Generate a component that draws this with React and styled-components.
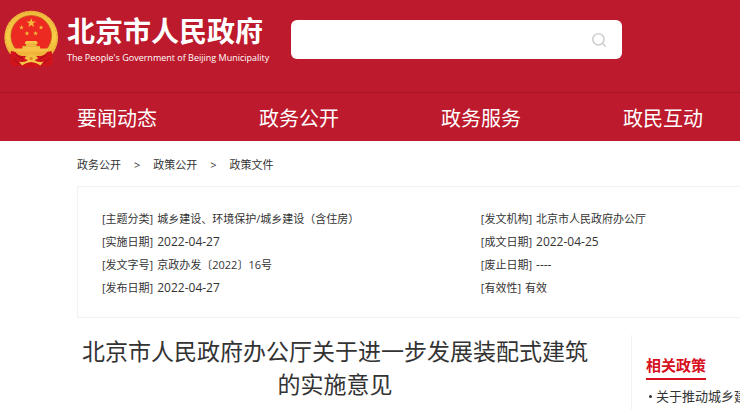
import React from 'react';
import styled, { createGlobalStyle, ThemeProvider } from 'styled-components';

const theme = {
  colors: {
    primary: '#bd1a2d',
    primaryDark: '#a01729',
    accent: '#d7101d',
    text: '#333333',
    border: '#f2f2f2',
    white: '#ffffff',
    icon: '#d0d0d0',
  },
  gutter: '77px',
};

const GlobalStyle = createGlobalStyle`
  * {
    box-sizing: border-box;
  }

  body {
    margin: 0;
    background: #ffffff;
    color: #333333;
    font-family: 'Open Sans', 'Noto Sans CJK SC', sans-serif;
    font-size: 11px;
  }

  a {
    color: inherit;
    text-decoration: none;
  }

  h1, h2, ul, ol, dl, dd {
    margin: 0;
    padding: 0;
  }

  ul, ol {
    list-style: none;
  }
`;

const Header = styled.header`
  background: ${({ theme }) => theme.colors.primary};
  color: ${({ theme }) => theme.colors.white};
`;

const Banner = styled.div`
  display: flex;
  align-items: flex-start;
  height: 92px;
  padding: 10px 118px 0 4px;
`;

const Brand = styled.a`
  display: flex;
  flex: none;
  width: 287px;
  gap: 8px;
`;

const Emblem = styled.svg`
  display: block;
  flex: none;
  width: 55px;
  height: 58px;
`;

const BrandText = styled.div`
  display: flex;
  flex-direction: column;
  padding-top: 5px;
  white-space: nowrap;
`;

const BrandName = styled.strong`
  font-size: 28px;
  line-height: 32px;
`;

const BrandSub = styled.span`
  font-size: 9px;
  line-height: 22px;
`;

const SearchForm = styled.form`
  display: flex;
  flex: 1;
  align-items: center;
  height: 39px;
  margin-top: 10px;
  padding-right: 15px;
  border-radius: 6px;
  background: ${({ theme }) => theme.colors.white};
`;

const SearchInput = styled.input`
  flex: 1;
  min-width: 0;
  height: 100%;
  padding: 0 12px;
  border: 0;
  outline: 0;
  background: transparent;
  font: inherit;
  font-size: 13px;
`;

const SearchButton = styled.button`
  display: flex;
  padding: 0;
  border: 0;
  background: transparent;
  color: ${({ theme }) => theme.colors.icon};
  cursor: pointer;
`;

const Nav = styled.nav`
  display: flex;
  align-items: center;
  justify-content: space-between;
  height: 49px;
  padding: 3px 37px 0 ${({ theme }) => theme.gutter};
  border-top: 1px solid ${({ theme }) => theme.colors.primaryDark};
`;

const NavLink = styled.a`
  font-size: 20px;
  line-height: 28px;
`;

const Main = styled.main`
  padding-left: ${({ theme }) => theme.gutter};
`;

const Breadcrumb = styled.ol`
  display: flex;
  align-items: center;
  height: 45px;
  padding-top: 2px;
`;

const Crumb = styled.li`
  line-height: 20px;

  & + &::before {
    content: '>';
    margin: 0 13px;
  }
`;

const MetaBox = styled.section`
  display: grid;
  grid-template-columns: 19fr 13fr;
  padding: 20px 0 18px 24px;
  border: 1px solid ${({ theme }) => theme.colors.border};
  border-right: 0;
`;

const MetaList = styled.dl`
  display: flex;
  flex-direction: column;
  white-space: nowrap;
`;

const MetaRow = styled.div`
  display: flex;
  align-items: center;
  gap: 4px;
  height: 23px;
  line-height: 22px;
`;

const MetaValue = styled.dd`
  font-size: ${({ $numeric }) => ($numeric ? '12px' : '11px')};
`;

const Article = styled.div`
  display: grid;
  grid-template-columns: minmax(0, 1fr) 109px;
  gap: 38px;
  padding-top: 17px;
`;

const Title = styled.h1`
  font-size: 23px;
  font-weight: 400;
  line-height: 33px;
  text-align: center;
`;

const Aside = styled.aside`
  min-height: 75px;
  padding: 20px 0 0 14px;
  border-left: 1px solid ${({ theme }) => theme.colors.border};
  overflow: hidden;
  white-space: nowrap;
`;

const AsideTitle = styled.h2`
  width: fit-content;
  padding-bottom: 3px;
  border-bottom: 2px solid ${({ theme }) => theme.colors.accent};
  color: ${({ theme }) => theme.colors.accent};
  font-size: 15px;
  line-height: 20px;
`;

const AsideItem = styled.li`
  display: flex;
  align-items: center;
  gap: 4px;
  padding: 6px 0 0 3px;
  font-size: 13px;
  line-height: 20px;

  &::before {
    content: '';
    flex: none;
    width: 3px;
    height: 3px;
    border-radius: 50%;
    background: ${({ theme }) => theme.colors.text};
  }
`;

const navItems = ['要闻动态', '政务公开', '政务服务', '政民互动'];

const crumbs = ['政务公开', '政策公开', '政策文件'];

const metaColumns = [
  [
    { label: '主题分类', value: '城乡建设、环境保护/城乡建设（含住房）' },
    { label: '实施日期', value: '2022-04-27', numeric: true },
    { label: '发文字号', value: '京政办发〔2022〕16号' },
    { label: '发布日期', value: '2022-04-27', numeric: true },
  ],
  [
    { label: '发文机构', value: '北京市人民政府办公厅' },
    { label: '成文日期', value: '2022-04-25', numeric: true },
    { label: '废止日期', value: '----', numeric: true },
    { label: '有效性', value: '有效' },
  ],
];

const related = ['关于推动城乡建设'];

const STAR = 'M0-5 1.2-1.6 4.8-1.5 1.9.6 2.9 4 0 2-2.9 4-1.9.6-4.8-1.5-1.2-1.6Z';

// x, y, scale
const stars = [
  [27.2, 13, 1],
  [17.5, 17.5, 0.5],
  [37, 17.5, 0.5],
  [23, 23.4, 0.5],
  [31.6, 23.4, 0.5],
];

function NationalEmblem() {
  return (
    <Emblem viewBox="0 0 55 58" aria-hidden="true">
      <defs>
        <linearGradient id="gold" x1="0" y1="0" x2="0" y2="1">
          <stop offset="0" stopColor="#f0b93c" />
          <stop offset="0.5" stopColor="#f8cc45" />
          <stop offset="1" stopColor="#e9a92e" />
        </linearGradient>
        <clipPath id="ring">
          <path d="M0 0h55v44H0Z" />
        </clipPath>
      </defs>
      <g clipPath="url(#ring)">
        <circle cx="27.2" cy="27.5" r="26.8" fill="url(#gold)" />
        <circle cx="27.2" cy="27.5" r="25.6" fill="none" stroke="#e0a235" strokeDasharray="2 2" />
      </g>
      <circle cx="27.2" cy="25.8" r="20.3" fill="#ec2a21" stroke="#bf5a1c" strokeWidth="0.7" />
      {stars.map(([x, y, s]) => (
        <path key={`${x}-${y}`} d={STAR} transform={`translate(${x} ${y}) scale(${s})`} fill="#f3b83c" />
      ))}
      <path d="M22 31h10.5l1.5 2.5-1.5.6V36H36v2l1 3H17.5l1-3v-2H22v-1.9l-1.5-.6Z" fill="#f5c547" />
      <path d="M22 34.3h10.5M18.5 36.3H36" stroke="#dc922c" strokeWidth="0.6" />
      <path d="M10.5 38.5H44l.5 4.500H10Z" fill="#f5c146" />
      <path d="M7 41q20 5 40.5 0l1.500 8-1 5-5.500 3-3.500-2-3 2.500H19l-3.500-2.500-3.500 2L6.500 54 6 48Z" fill="#d1141b" />
      <path d="M11 41.5h32.5q-3 4-7 4.500H18q-4-.5-7-4.500Z" fill="#f0b43a" />
      <path d="M9 48l6 6M45.5 48l-6 6M12 45l7 4M42.5 45l-7 4" stroke="#a20d17" />
      <path d="M20.5 48.500a7 5 0 0 1 13.500 0l-3 1.500h-7.500Z" fill="#f4c044" />
      <circle cx="27.2" cy="48.5" r="1.6" fill="#d7892a" />
      <path d="M15 51.5q6 1.500 9-1.500h6.500q3 3 9 1.500l-3 4q-4.500-3.500-9.300-3.500T18 55.500Z" fill="#f6c947" />
      <path d="M19 57q8-5.500 16.500 0Z" fill="#d1141b" />
    </Emblem>
  );
}

function SearchIcon() {
  return (
    <svg width="16" height="16" viewBox="0 0 16 16" fill="none" stroke="currentColor" strokeWidth="1.6" aria-hidden="true">
      <circle cx="7.4" cy="7.3" r="5.6" />
      <path d="m11.3 11.3 3 3" strokeLinecap="round" />
    </svg>
  );
}

export default function App() {
  return (
    <ThemeProvider theme={theme}>
      <GlobalStyle />
      <Header>
        <Banner>
          <Brand href="#">
            <NationalEmblem />
            <BrandText>
              <BrandName>北京市人民政府</BrandName>
              <BrandSub>The People's Government of Beijing Municipality</BrandSub>
            </BrandText>
          </Brand>
          <SearchForm role="search" onSubmit={(e) => e.preventDefault()}>
            <SearchInput type="text" aria-label="搜索" />
            <SearchButton type="submit" aria-label="搜索">
              <SearchIcon />
            </SearchButton>
          </SearchForm>
        </Banner>
        <Nav>
          {navItems.map((item) => (
            <NavLink key={item} href="#">{item}</NavLink>
          ))}
        </Nav>
      </Header>
      <Main>
        <Breadcrumb>
          {crumbs.map((crumb) => (
            <Crumb key={crumb}>
              <a href="#">{crumb}</a>
            </Crumb>
          ))}
        </Breadcrumb>
        <MetaBox>
          {metaColumns.map((rows, i) => (
            <MetaList key={i}>
              {rows.map((row) => (
                <MetaRow key={row.label}>
                  <dt>[{row.label}]</dt>
                  <MetaValue $numeric={row.numeric}>{row.value}</MetaValue>
                </MetaRow>
              ))}
            </MetaList>
          ))}
        </MetaBox>
        <Article>
          <Title>北京市人民政府办公厅关于进一步发展装配式建筑的实施意见</Title>
          <Aside>
            <AsideTitle>相关政策</AsideTitle>
            <ul>
              {related.map((item) => (
                <AsideItem key={item}>
                  <a href="#">{item}</a>
                </AsideItem>
              ))}
            </ul>
          </Aside>
        </Article>
      </Main>
    </ThemeProvider>
  );
}
